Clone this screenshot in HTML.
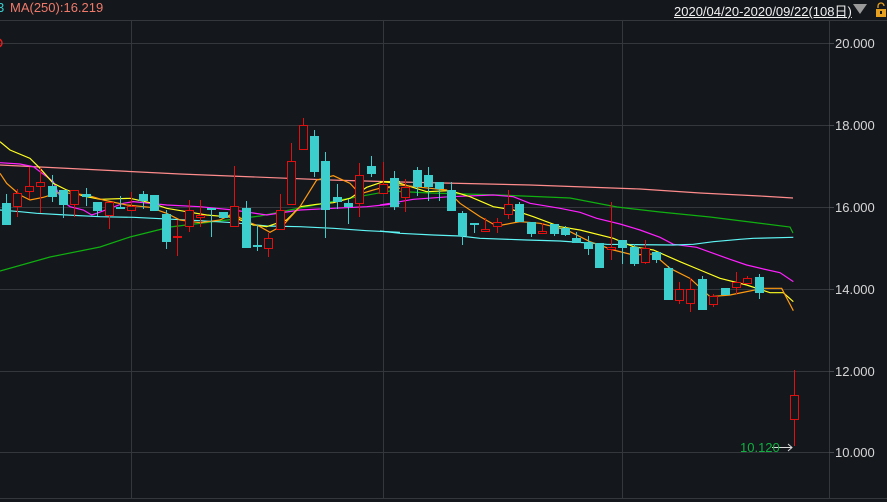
<!DOCTYPE html>
<html><head><meta charset="utf-8"><style>
html,body{margin:0;padding:0;background:#14171c;width:887px;height:502px;overflow:hidden;font-family:"Liberation Sans","Noto Sans CJK SC",sans-serif}
.t{position:absolute;white-space:nowrap}
.ax{position:absolute;left:835px;color:#d6d6d6;font-size:13px;line-height:14px}
</style></head><body>
<svg width="887" height="502" style="position:absolute;left:0;top:0">
<g stroke="#34373c" stroke-width="1" shape-rendering="crispEdges">
<line x1="0" y1="20.5" x2="887" y2="20.5"/>
<line x1="0" y1="43.5" x2="829" y2="43.5"/><line x1="0" y1="125.5" x2="829" y2="125.5"/>
<line x1="0" y1="207.5" x2="829" y2="207.5"/><line x1="0" y1="289.5" x2="829" y2="289.5"/>
<line x1="0" y1="371.5" x2="829" y2="371.5"/><line x1="0" y1="452.5" x2="829" y2="452.5"/>
<line x1="0" y1="498.5" x2="887" y2="498.5"/>
<line x1="131.5" y1="20" x2="131.5" y2="498"/><line x1="383.5" y1="20" x2="383.5" y2="498"/>
<line x1="622.5" y1="20" x2="622.5" y2="498"/><line x1="829.5" y1="20" x2="829.5" y2="498"/>
</g>
<g stroke="#464a50" shape-rendering="crispEdges"><line x1="829" y1="43.5" x2="834" y2="43.5"/><line x1="829" y1="125.5" x2="834" y2="125.5"/><line x1="829" y1="207.5" x2="834" y2="207.5"/><line x1="829" y1="289.5" x2="834" y2="289.5"/><line x1="829" y1="371.5" x2="834" y2="371.5"/><line x1="829" y1="452.5" x2="834" y2="452.5"/></g>
<circle cx="-2" cy="43" r="4" fill="none" stroke="#e02020" stroke-width="1.5"/>
<g fill="none" stroke-width="1.2">
<polyline stroke="#ff8c8c" points="0,165 180,174 330,180 400,182 530,185 640,189 700,193 760,196 793,198"/>
<polyline stroke="#10b010" points="0,271 50,257 100,247 130,237 170,227 260,216 290,210 340,200 390,191 430,193 500,195 570,198 617,207 660,212 710,217 750,222 790,227 793,233"/>
</g>
<g transform="translate(0,110) scale(0.33333)" fill="none" stroke-width="1.2">
<polyline vector-effect="non-scaling-stroke" stroke="#ff20ff" points="0,158 60,162 100,170 120,185 140,200 160,215 175,250 190,275 210,290 250,300 275,315 290,310 330,295 370,280 400,275 500,285 600,290 700,300 800,315 900,300 1000,295 1100,290 1200,280"/>
<polyline vector-effect="non-scaling-stroke" stroke="#5ff5f5" points="0,300 60,305 110,310 200,315 300,320 400,322 520,328 600,332 700,338 800,348 900,350 1000,355 1100,362 1200,367"/>
<polyline vector-effect="non-scaling-stroke" stroke="#ffff20" points="0,95 30,120 90,145 120,175 160,220 200,240 250,258 300,268 390,265 450,278 500,295 560,305 620,315 700,322 760,345 800,350 860,330 900,290 950,283 1000,278 1050,265 1100,232 1150,215 1200,215"/>
<polyline vector-effect="non-scaling-stroke" stroke="#ff9a10" points="0,190 20,220 60,255 90,270 130,262 180,247 260,255 310,270 380,285 450,292 500,310 540,330 600,338 660,330 700,310 730,330 780,350 810,367 850,345 900,290 950,210 1000,197 1050,220 1080,252 1120,240 1150,232 1200,235"/>
</g>
<g transform="translate(380,150) scale(0.33333)" fill="none" stroke-width="1.2">
<polyline vector-effect="non-scaling-stroke" stroke="#ff20ff" points="0,165 100,148 210,140 340,135 400,140 450,160 540,175 600,187 650,205 720,222 780,240 840,262 880,283 950,292 1000,310 1050,328 1100,345 1150,357 1200,368 1240,395"/>
<polyline vector-effect="non-scaling-stroke" stroke="#5ff5f5" points="0,243 60,250 160,255 240,258 300,265 440,270 540,273 680,283 880,285 940,283 1000,275 1080,268 1120,265 1240,262"/>
<polyline vector-effect="non-scaling-stroke" stroke="#ffff20" points="0,95 60,100 140,125 210,122 270,140 340,170 400,180 460,200 540,230 600,240 700,265 760,290 820,300 900,335 960,360 1020,385 1100,405 1170,428 1210,428 1240,455"/>
<polyline vector-effect="non-scaling-stroke" stroke="#ff9a10" points="0,115 60,105 150,115 200,120 240,160 300,200 350,228 420,215 480,220 560,240 630,275 700,300 760,315 820,312 870,355 930,385 990,440 1050,435 1150,415 1205,415 1240,482"/>
</g>
<g id="c" stroke-width="1" shape-rendering="crispEdges"></g>
<g stroke="#dddddd" fill="none"><line x1="772" y1="447.5" x2="792" y2="447.5"/><polyline points="788,444 792,447.5 788,451"/></g>
<g transform="translate(876,3)"><path d="M2,5 V3 a3,3 0 0 1 6,0" stroke="#e8a020" fill="none" stroke-width="1.3"/><rect x="0" y="6" width="10" height="8" fill="#e8a020"/><rect x="4" y="8" width="2" height="3" fill="#14171c"/></g>
<polygon points="853,4 867,4 860,14" fill="#9a9a9a"/>
</svg>
<script>
var d=[
[6,203,225,194,225,0],[17,193,206,189,217,1],[29,186,191,167,199,1],[40,182,186,168,213,1],[52,186,197,175,202,0],[63,190,205,190,218,0],[74,190,204,190,217,1],[86,194,197,188,206,0],[97,202,211,202,216,0],[109,202,215,202,229,1],[120,207,209,196,209,0],[131,206,210,192,210,1],[143,194,201,191,209,0],[154,195,211,195,211,0],[166,214,242,210,249,0],[177,236,237,220,256,1],[189,210,226,200,232,1],[200,215,217,200,227,1],[211,208,210,208,237,0],[223,212,218,212,218,0],[234,206,226,166,226,1],[246,208,248,201,248,0],[257,245,247,225,251,0],[268,238,248,233,257,1],[280,210,229,194,229,1],[291,161,204,143,204,1],[303,125,149,118,149,1],[314,136,172,130,177,0],[325,161,210,152,238,0],[337,197,202,184,209,0],[348,203,207,199,224,0],[359,175,203,163,217,1],[371,166,174,156,177,0],[383,184,193,162,193,1],[394,178,207,171,210,0],[405,187,197,179,212,1],[417,170,187,167,196,0],[428,175,187,167,201,0],[439,182,189,182,201,0],[451,190,211,182,211,0],[462,213,236,211,245,0],[474,223,225,223,233,0],[485,229,231,218,231,1],[497,222,226,218,233,1],[508,204,214,190,219,1],[519,204,222,202,222,0],[531,222,234,222,237,0],[542,231,233,223,233,1],[554,224,234,224,236,0],[565,228,235,226,236,0],[576,238,243,232,243,0],[588,242,249,236,255,0],[599,243,268,243,268,0],[611,247,249,202,260,1],[622,240,248,240,264,0],[634,247,264,244,266,0],[645,248,262,240,264,1],[656,252,260,252,263,0],[668,268,300,266,300,0],[679,289,300,282,304,1],[690,289,303,278,312,1],[702,279,310,276,310,0],[713,296,304,294,307,1],[725,288,295,288,295,0],[736,282,287,272,294,1],[747,278,283,276,283,1],[759,277,293,274,299,0],[794,395,419,370,446,1]];
var s='';d.forEach(function(c){var x=c[0],col=c[5]?'#e01010':'#3ccdcd',t=c[1],b=c[2],h=Math.max(b-t,1.5);
if(c[5]){s+='<line x1="'+(x+.5)+'" y1="'+c[3]+'" x2="'+(x+.5)+'" y2="'+t+'" stroke="'+col+'"/><line x1="'+(x+.5)+'" y1="'+b+'" x2="'+(x+.5)+'" y2="'+c[4]+'" stroke="'+col+'"/><rect x="'+(x-4+.5)+'" y="'+(t+.5)+'" width="8" height="'+Math.max(b-t,1)+'" fill="#14171c" stroke="'+col+'"/>';}
else{s+='<line x1="'+(x+.5)+'" y1="'+c[3]+'" x2="'+(x+.5)+'" y2="'+c[4]+'" stroke="'+col+'"/><rect x="'+(x-4)+'" y="'+t+'" width="9" height="'+h+'" fill="'+col+'"/>';}});
document.getElementById('c').innerHTML=s;
</script>
<div class="t" style="left:-3px;top:0;font-size:13px;color:#3ccdcd">3</div>
<div class="t" style="left:10px;top:0;font-size:13px;color:#f07a6a">MA(250):16.219</div>
<div class="t" style="left:674px;top:1px;font-size:13px;color:#f0f0f0;text-decoration:underline">2020/04/20-2020/09/22(108日)</div>
<div class="ax" style="top:37px">20.000</div>
<div class="ax" style="top:119px">18.000</div>
<div class="ax" style="top:201px">16.000</div>
<div class="ax" style="top:283px">14.000</div>
<div class="ax" style="top:365px">12.000</div>
<div class="ax" style="top:446px">10.000</div>
<div class="t" style="left:740px;top:440px;font-size:13px;color:#10b040">10.120</div>
</body></html>
